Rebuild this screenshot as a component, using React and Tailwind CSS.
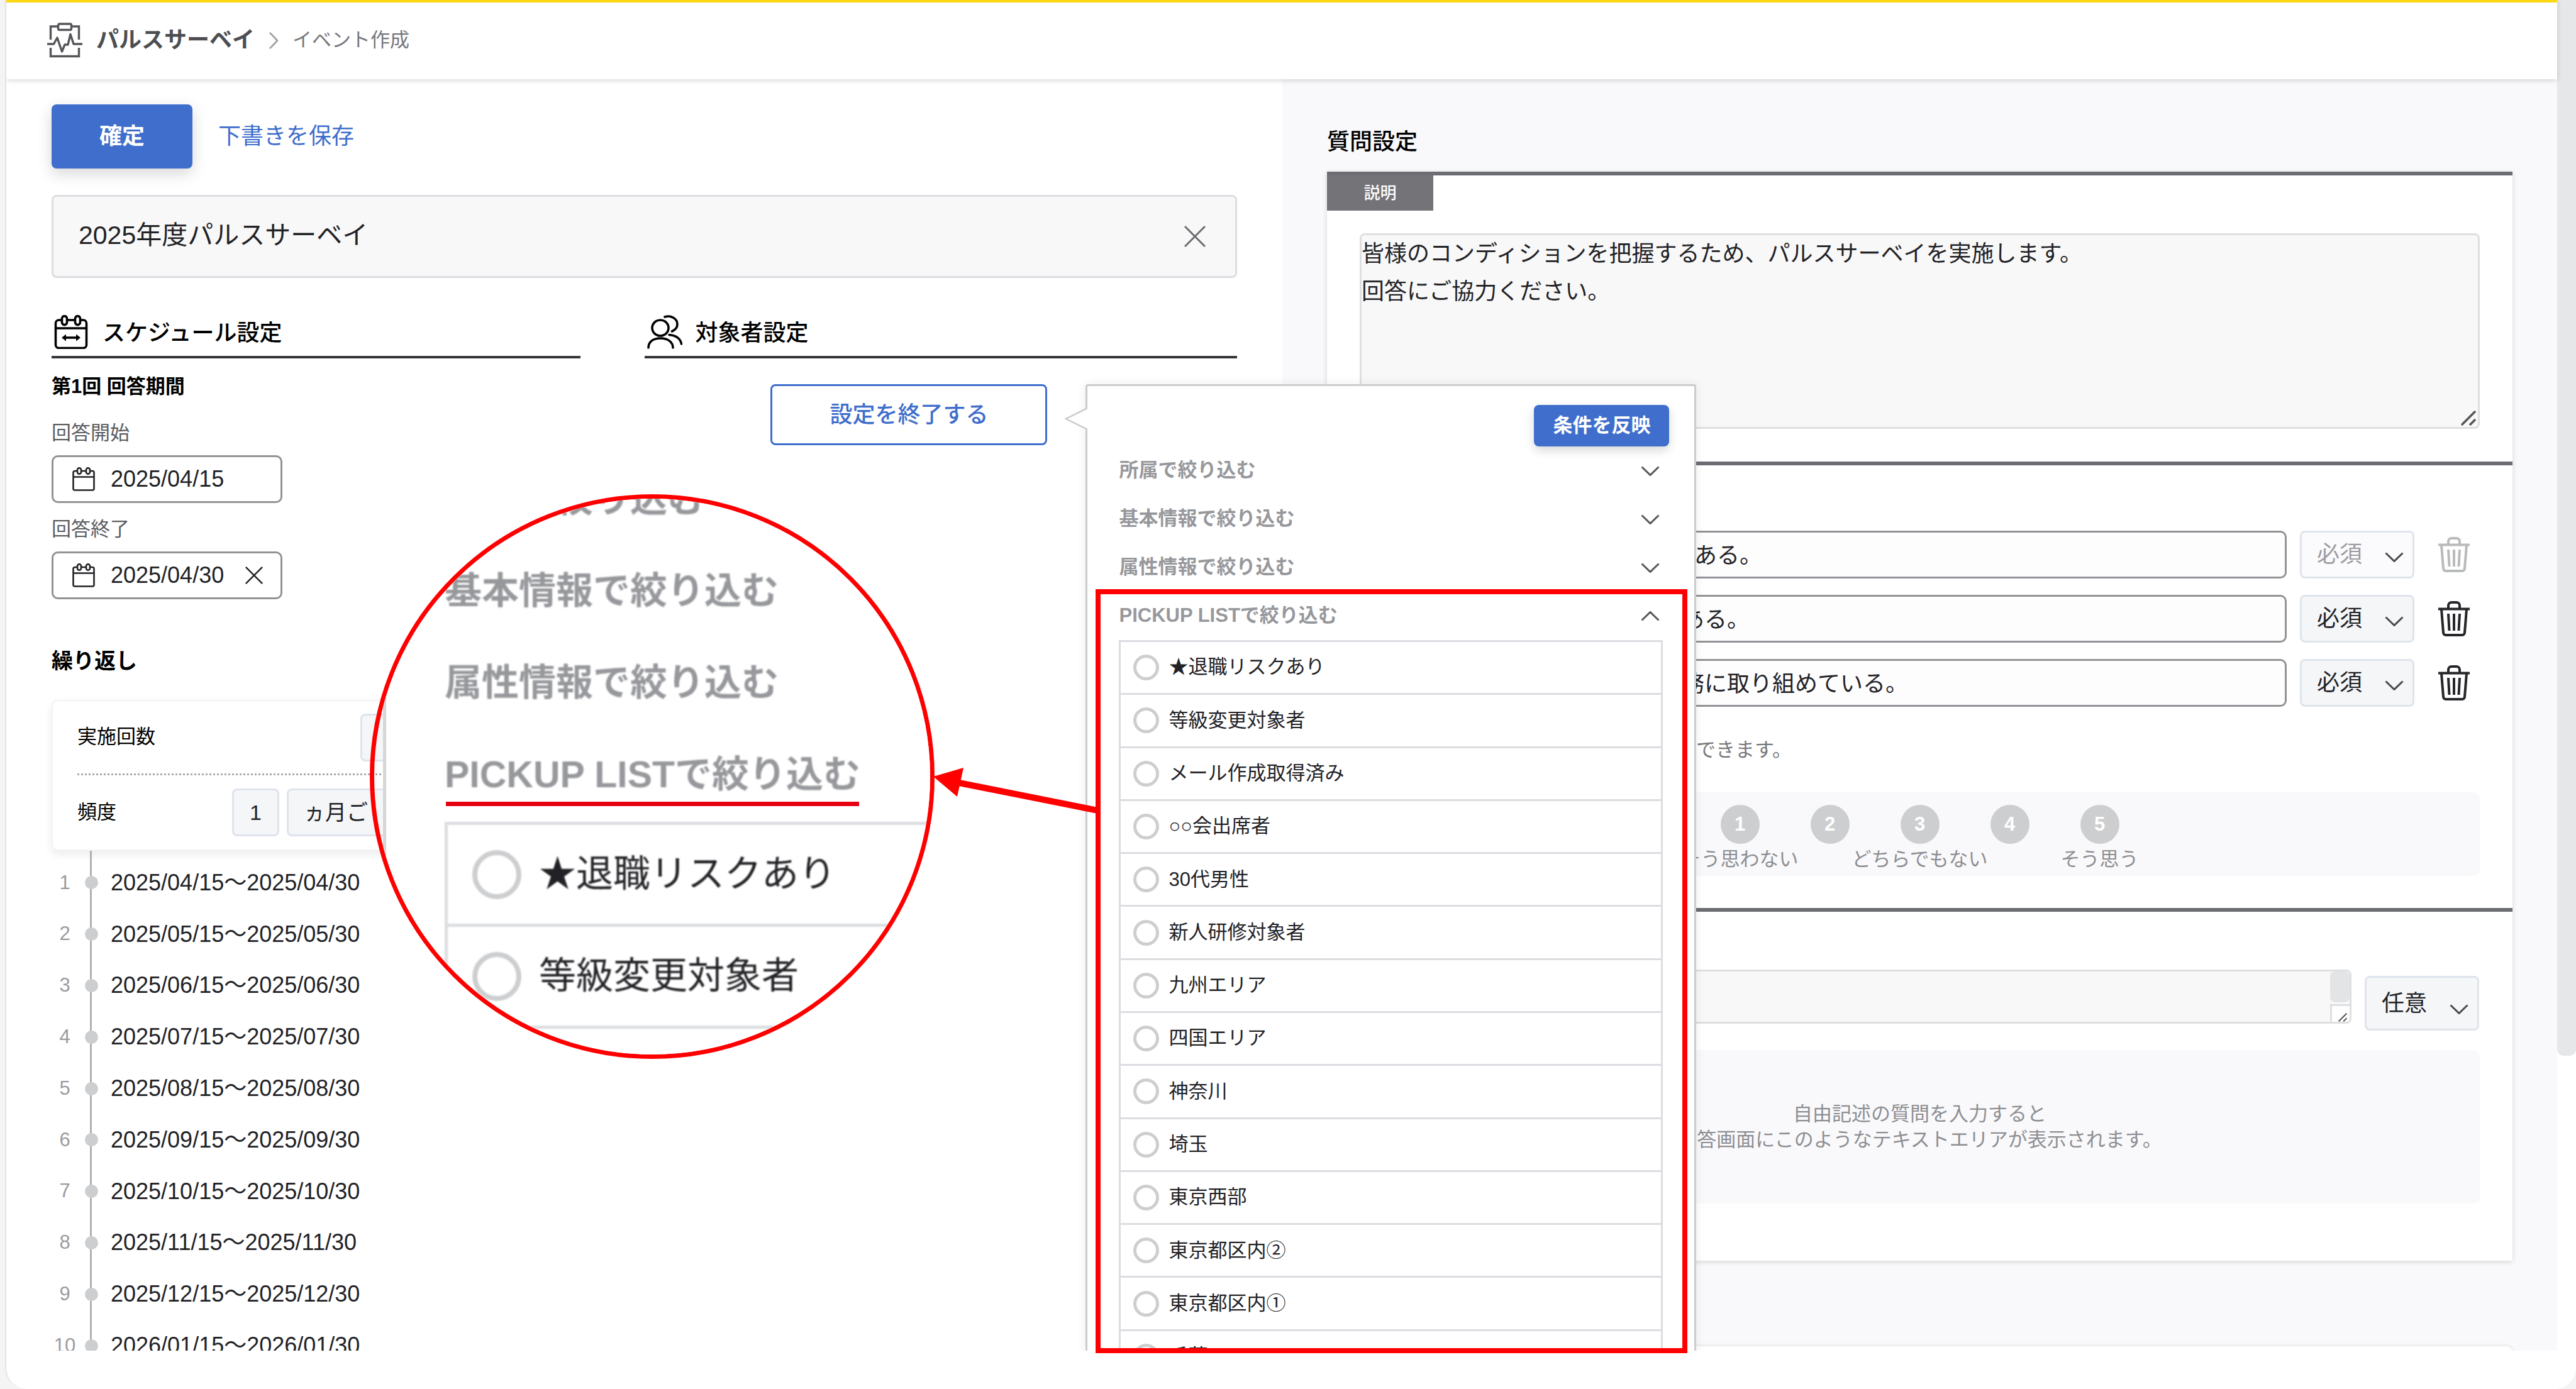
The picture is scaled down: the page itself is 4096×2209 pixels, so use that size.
import { useState } from 'react';

const SCHEDULE = [
  '2025/04/15～2025/04/30',
  '2025/05/15～2025/05/30',
  '2025/06/15～2025/06/30',
  '2025/07/15～2025/07/30',
  '2025/08/15～2025/08/30',
  '2025/09/15～2025/09/30',
  '2025/10/15～2025/10/30',
  '2025/11/15～2025/11/30',
  '2025/12/15～2025/12/30',
  '2026/01/15～2026/01/30',
];

const PICKUP_LIST = [
  '★退職リスクあり',
  '等級変更対象者',
  'メール作成取得済み',
  '○○会出席者',
  '30代男性',
  '新人研修対象者',
  '九州エリア',
  '四国エリア',
  '神奈川',
  '埼玉',
  '東京西部',
  '東京都区内②',
  '東京都区内①',
  '千葉',
];

const FILTERS = ['所属で絞り込む', '基本情報で絞り込む', '属性情報で絞り込む', 'PICKUP LISTで絞り込む'];

const SCALE = [
  { value: 1, label: 'そう思わない' },
  { value: 2, label: '' },
  { value: 3, label: 'どちらでもない' },
  { value: 4, label: '' },
  { value: 5, label: 'そう思う' },
];

function Chevron({ className }) {
  return (
    <svg className={className} viewBox="0 0 30 16" fill="none" stroke="currentColor" strokeWidth="3" aria-hidden="true">
      <path d="M1.5 1.5 15 14.5 28.5 1.5" />
    </svg>
  );
}

function Cross({ className }) {
  return (
    <svg className={className} viewBox="0 0 34 34" fill="none" stroke="currentColor" strokeWidth="3" aria-hidden="true">
      <path d="M1 1l32 32M33 1L1 33" />
    </svg>
  );
}

function PulseIcon() {
  return (
    <svg className="h-[56px] w-[56px] text-[#55565a]" viewBox="0 0 56 56" fill="none" stroke="currentColor" strokeWidth="3.4" aria-hidden="true">
      <path d="M5.5 27V6H17M39 6H50.5V27M5.5 40V53.5H50.5V40" />
      <rect x="17.5" y="2" width="21" height="9.5" rx="2" />
      <path d="M0 34H10.5L16 24 23.5 46 28 35H33L37 18.5 42 34H56" strokeLinejoin="round" />
    </svg>
  );
}

function ScheduleIcon() {
  return (
    <svg className="h-[54px] w-[54px]" viewBox="0 0 54 54" fill="none" stroke="currentColor" strokeWidth="3.6" aria-hidden="true">
      <path d="M11 8H7.5a5 5 0 0 0-5 5v34.5a5 5 0 0 0 5 5h39a5 5 0 0 0 5-5V13a5 5 0 0 0-5-5H43M21.5 8h11M2.5 21h49" />
      <rect x="12.5" y="1.6" width="8" height="14" rx="4" />
      <rect x="33.5" y="1.6" width="8" height="14" rx="4" />
      <path d="M15 36h24" />
      <path d="M19 30.5v11L12 36zM35 30.5v11L42 36z" fill="currentColor" stroke="none" />
    </svg>
  );
}

function PeopleIcon() {
  return (
    <svg className="h-[54px] w-[56px]" viewBox="0 0 56 54" fill="none" stroke="currentColor" strokeWidth="3.6" strokeLinecap="round" aria-hidden="true">
      <ellipse cx="21" cy="20.5" rx="13" ry="12.5" />
      <path d="M2 52C2 43 9 37 21 37s20 6 20 15" />
      <path d="M28 3c9-3 20 2 20 11.5 0 6-4 9.5-8.5 11.5M35 31.5C46 32 53 38 54.5 46" />
    </svg>
  );
}

function CalendarIcon() {
  return (
    <svg className="h-[38px] w-[36px]" viewBox="0 0 36 38" fill="none" stroke="currentColor" strokeWidth="2.6" aria-hidden="true">
      <path d="M7 6H4a2.5 2.5 0 0 0-2.5 2.5V34A2.5 2.5 0 0 0 4 36.5h28a2.5 2.5 0 0 0 2.5-2.5V8.5A2.5 2.5 0 0 0 32 6h-3M14.5 6h7M1.5 15.5h33" />
      <rect x="8" y="1.2" width="6" height="9.5" rx="3" />
      <rect x="22" y="1.2" width="6" height="9.5" rx="3" />
    </svg>
  );
}

function TrashIcon() {
  return (
    <svg className="h-[56px] w-[50px]" viewBox="0 0 50 56" fill="none" stroke="currentColor" strokeWidth="4" strokeLinejoin="round" aria-hidden="true">
      <path d="M0 12.5h50M16 12V7a5 5 0 0 1 5-5h8a5 5 0 0 1 5 5v5" />
      <path d="M5 13l3 37a4 4 0 0 0 4 4h26a4 4 0 0 0 4-4l3-37" />
      <path d="M16 20l1.5 27M25 20v27M34 20l-1.5 27" />
    </svg>
  );
}

function Grip({ className }) {
  return (
    <svg className={className} viewBox="0 0 24 24" fill="none" stroke="#555" strokeWidth="3.5" aria-hidden="true">
      <path d="M1 23 23 1M14 23l9-9" />
    </svg>
  );
}

function DateField({ id, label, value, clearable }) {
  return (
    <div>
      <label htmlFor={id} className="block text-[31px] leading-[46px] text-[#5b5c60]">
        {label}
      </label>
      <div className="mt-[12px] flex h-[76px] w-[367px] items-center rounded-[10px] border-[3px] border-[#929396] bg-white pl-[30px]">
        <CalendarIcon />
        <input id={id} defaultValue={value} className="ml-[25px] w-[190px] text-[36px] leading-[46px] outline-none" />
        {clearable && (
          <button type="button" aria-label="クリア" className="ml-[24px]">
            <Cross className="h-[28px] w-[28px]" />
          </button>
        )}
      </div>
    </div>
  );
}

function RequiredSelect({ label, value, disabled, className = 'h-[76px]' }) {
  return (
    <div className="relative w-[182px] shrink-0">
      <select
        aria-label={label}
        defaultValue={value}
        disabled={disabled}
        className={`${className} w-full appearance-none rounded-[8px] border-[3px] border-[#dfe4ec] pl-[24px] text-[36px] opacity-100 outline-none ${
          disabled ? 'bg-[#fbfbfd] text-[#9c9ca0]' : 'bg-[#f4f6f8] text-[#222226]'
        }`}
      >
        <option>必須</option>
        <option>任意</option>
      </select>
      <Chevron className="pointer-events-none absolute right-[17px] bottom-[26px] h-[16px] w-[30px] text-[#4a4a4e]" />
    </div>
  );
}

function QuestionRow({ id, value, disabled, indent }) {
  return (
    <div className="flex items-center">
      <input
        aria-label={id}
        defaultValue={value}
        className={`h-[76px] min-w-0 flex-1 rounded-[10px] border-[3px] border-[#929396] bg-[#fdfdfe] pb-[4px] text-[36px] outline-none ${indent}`}
      />
      <div className="ml-[21px]">
        <RequiredSelect label={`${id} 必須`} value="必須" disabled={disabled} />
      </div>
      <button type="button" aria-label="削除" className={`mr-[16px] ml-[38px] ${disabled ? 'text-[#b9babc]' : 'text-[#25262a]'}`}>
        <TrashIcon />
      </button>
    </div>
  );
}

function FilterPopover() {
  const [selected, setSelected] = useState('');

  return (
    <div className="absolute top-0 left-full z-20 ml-[61px] w-[971px] rounded-t-[4px] border-[3px] border-[#cbccce] bg-white shadow-[0_0_16px_rgba(0,0,0,0.08)]">
      {/* arrow to the button */}
      <svg className="absolute top-[34px] left-[-36px] h-[36px] w-[36px]" viewBox="0 0 36 36" aria-hidden="true">
        <path d="M36 1 2 18 36 35" fill="#fff" stroke="#cbccce" strokeWidth="2.5" />
      </svg>
      <div className="flex justify-end pt-[30px] pr-[40px]">
        <button type="button" className="h-[66px] w-[215px] rounded-[8px] bg-[#3f6ecc] text-[31px] font-bold text-white shadow-[0_6px_16px_rgba(0,0,0,0.16)]">
          条件を反映
        </button>
      </div>
      <div className="px-[50px]">
        {FILTERS.map((name, i) => (
          <button key={name} type="button" className="flex h-[77px] w-full items-center justify-between pr-[5px] text-[31px] font-bold text-[#97989c]">
            {name}
            <Chevron className={`h-[16px] w-[30px] text-[#55565a] ${i === 3 ? 'rotate-180' : ''}`} />
          </button>
        ))}
        <div className="grid h-[1183px] auto-rows-fr border-x-[3px] border-t-[3px] border-[#dcdde1]">
          {PICKUP_LIST.map((name) => (
            <label key={name} className="flex items-center border-b-[3px] border-[#dcdde1] pl-[20px] text-[31px]">
              <input
                type="radio"
                name="pickup"
                checked={selected === name}
                onChange={() => setSelected(name)}
                className="mr-[15px] h-[41px] w-[41px] appearance-none rounded-full border-[5px] border-[#cdced0] bg-white checked:border-[#3f6ecc]"
              />
              {name}
            </label>
          ))}
        </div>
      </div>
    </div>
  );
}

function EventSettings() {
  return (
    <section className="min-w-0 flex-1 px-[72px] pt-[40px]">
      <div className="flex items-center">
        <button type="button" className="h-[102px] w-[224px] rounded-[8px] bg-[#3f6ecc] text-[36px] font-bold text-white shadow-[0_8px_24px_rgba(0,0,0,0.16)]">
          確定
        </button>
        <button type="button" className="ml-[41px] text-[36px] text-[#3f6ecc]">
          下書きを保存
        </button>
      </div>

      <div className="mt-[42px] flex h-[132px] items-center rounded-[8px] border-[3px] border-[#dcdde1] bg-[#f8f8f8] pr-[47px] pl-[40px]">
        <input aria-label="イベント名" defaultValue="2025年度パルスサーベイ" className="min-w-0 flex-1 pb-[4px] text-[41px] leading-[60px] outline-none" />
        <button type="button" aria-label="クリア" className="text-[#6c6d70]">
          <Cross className="h-[34px] w-[34px]" />
        </button>
      </div>

      <div className="mt-[48px] grid grid-cols-[minmax(0,841fr)_minmax(0,941fr)] gap-[102px]">
        <div>
          <h2 className="flex h-[80px] items-center border-b-[4px] border-[#34353a] pl-[4px] text-[36px] font-medium text-black">
            <ScheduleIcon />
            <span className="ml-[23px] pt-[4px]">スケジュール設定</span>
          </h2>
          <h3 className="mt-[22px] text-[31px] leading-[46px] font-bold text-black">第1回 回答期間</h3>
          <div className="mt-[28px] flex flex-col gap-[19px]">
            <DateField id="start" label="回答開始" value="2025/04/15" />
            <DateField id="end" label="回答終了" value="2025/04/30" clearable />
          </div>
          <h3 className="mt-[75px] text-[34px] leading-[46px] font-bold text-black">繰り返し</h3>

          <div className="mt-[39px] rounded-[10px] border-[2px] border-[#f3f3f4] bg-white px-[39px] shadow-[0_6px_14px_rgba(0,0,0,0.08)]">
            <div className="flex h-[118px] items-center border-b-[3px] border-dotted border-[#a9aaad]">
              <label htmlFor="times" className="w-[450px] text-[31px] text-black">
                実施回数
              </label>
              <input id="times" className="h-[76px] min-w-0 flex-1 rounded-[8px] border-[3px] border-[#dfe4ec] bg-[#f4f6f8]" />
            </div>
            <div className="flex h-[118px] items-center">
              <label htmlFor="interval" className="w-[246px] text-[31px] text-black">
                頻度
              </label>
              <input id="interval" defaultValue="1" className="h-[76px] w-[75px] rounded-[8px] border-[3px] border-[#dfe4ec] bg-[#f4f6f8] text-center text-[34px]" />
              <select aria-label="単位" className="ml-[12px] h-[76px] min-w-0 flex-1 appearance-none rounded-[8px] border-[3px] border-[#dfe4ec] bg-[#f4f6f8] pr-[290px] pl-[24px] text-[34px]">
                <option>ヵ月ごと</option>
              </select>
            </div>
          </div>

          <div className="relative pt-[10px]">
            <div className="absolute inset-y-0 left-[61px] w-[3px] bg-[#b0b1b3]" />
            <ol className="relative grid h-[818px] auto-rows-fr">
              {SCHEDULE.map((period, i) => (
                <li key={period} className="flex items-center text-[36px]">
                  <span className="w-[42px] text-center text-[31px] text-[#9a9b9f]">{i + 1}</span>
                  <span className="ml-[11px] h-[21px] w-[21px] rounded-full bg-[#cdced0]" />
                  <span className="ml-[20px]">{period}</span>
                </li>
              ))}
            </ol>
          </div>
        </div>

        <div>
          <h2 className="flex h-[80px] items-center border-b-[4px] border-[#34353a] pl-[4px] text-[36px] font-medium text-black">
            <PeopleIcon />
            <span className="ml-[20px] pt-[4px]">対象者設定</span>
          </h2>
          <div className="mt-[41px] pl-[200px]">
            <div className="relative w-[440px]">
              <button type="button" className="h-[97px] w-full rounded-[8px] border-[3px] border-[#3f6ecc] bg-white text-[36px] font-medium text-[#3f6ecc]">
                設定を終了する
              </button>
              <FilterPopover />
            </div>
          </div>
        </div>
      </div>
    </section>
  );
}

function QuestionSettings() {
  return (
    <section className="min-w-0 flex-1 bg-[#f9f9fb] px-[71px] pt-[77px]">
      <h2 className="text-[36px] leading-[46px] font-medium text-black">質問設定</h2>

      <div className="mt-[24px] bg-white shadow-[0_2px_8px_rgba(0,0,0,0.14)]">
        <div className="border-t-[6px] border-[#6c6d72] pb-[52px]">
          <div className="flex h-[56px] w-[169px] items-center justify-center bg-[#747478] text-[26px] font-medium text-white">説明</div>
          <div className="relative mx-[52px] mt-[36px] h-[311px]">
            <textarea
              aria-label="説明"
              defaultValue={'皆様のコンディションを把握するため、パルスサーベイを実施します。\n回答にご協力ください。'}
              className="block h-full w-full resize-none rounded-[8px] border-[3px] border-[#dedfe1] bg-[#f8f8f8] text-[36px] leading-[60px] outline-none"
            />
            <Grip className="pointer-events-none absolute right-[6px] bottom-[5px] h-[24px] w-[24px]" />
          </div>
        </div>

        <div className="border-t-[6px] border-[#6c6d72] px-[52px] pt-[104px] pb-[51px]">
          <div className="flex flex-col gap-[26px]">
            <QuestionRow id="質問1" value="ある。" indent="pl-[529px]" disabled />
            <QuestionRow id="質問2" value="ある。" indent="pl-[509px]" />
            <QuestionRow id="質問3" value="務に取り組めている。" indent="pl-[509px]" />
          </div>
          <p className="mt-[46px] pl-[535px] text-[31px] leading-[46px] text-[#77787c]">できます。</p>
          <div className="mt-[44px] flex h-[133px] justify-center rounded-[10px] bg-[#f9f9fb] pt-[20px]">
            {SCALE.map(({ value, label }) => (
              <div key={value} className="flex w-[143px] flex-col items-center">
                <span className="flex h-[62px] w-[62px] items-center justify-center rounded-full bg-[#cdced0] text-[31px] font-bold text-white">{value}</span>
                <span className="mt-[2px] text-[31px] leading-[46px] whitespace-nowrap text-[#8d8e92]">{label}</span>
              </div>
            ))}
          </div>
        </div>

        <div className="border-t-[6px] border-[#6c6d72] px-[52px] pt-[92px] pb-[91px]">
          <div className="flex">
            <div className="relative h-[86px] min-w-0 flex-1 overflow-hidden rounded-[8px] border-[3px] border-[#dedfe1] bg-[#f8f8f8]">
              <textarea aria-label="自由記述" className="block h-full w-full resize-none outline-none" />
              <div className="absolute inset-y-0 right-0 flex w-[31px] flex-col bg-[#f8f8f8]">
                <div className="h-[49px] rounded-[8px] bg-[#e3e4e6]" />
                <div className="mt-[3px] flex-1 border-t-[3px] border-l-[3px] border-[#dedfe1] bg-white">
                  <Grip className="mt-[11px] ml-[10px] h-[14px] w-[14px]" />
                </div>
              </div>
            </div>
            <div className="mt-[10px] mr-[1px] ml-[21px]">
              <RequiredSelect label="自由記述 任意" value="任意" className="h-[87px]" />
            </div>
          </div>
          <div className="mt-[31px] flex h-[244px] items-center justify-center rounded-[10px] bg-[#f9f9fb] text-center text-[31px] leading-[41px] text-[#8d8e92]">
            <p>
              自由記述の質問を入力すると
              <br />
              回答画面にこのようなテキストエリアが表示されます。
            </p>
          </div>
        </div>
      </div>

      <div className="mt-[136px] h-[120px] rounded-t-[10px] bg-white shadow-[0_0_6px_rgba(0,0,0,0.12)]" />
    </section>
  );
}

// Red callout: frame round the pickup list, arrow and magnified lens
function Callout() {
  return (
    <div className="pointer-events-none absolute inset-0 z-30">
      <div className="absolute top-[937px] left-[1742px] h-[1215px] w-[941px] border-[8px] border-[#ff0000]" />

      <div className="absolute top-[786px] left-[588px] h-[898px] w-[898px] overflow-hidden rounded-full border-[7px] border-[#ff0000]">
        <div className="absolute inset-y-0 right-0 left-[14px] border-l-[5px] border-[#d5d6d8] bg-white" />
        <div className="relative -mt-[72px] pl-[112px] blur-[1px]">
          {FILTERS.map((name) => (
            <div key={name} className="flex h-[146px] items-center text-[59px] font-bold whitespace-nowrap text-[#97989c]">
              {name}
            </div>
          ))}
          <div className="mt-[2px] w-[900px] border-l-[5px] border-[#dcdde1]">
            {PICKUP_LIST.slice(0, 3).map((name) => (
              <div key={name} className="flex h-[162px] items-center border-t-[5px] border-[#dcdde1] pl-[39px] text-[59px] whitespace-nowrap">
                <span className="mr-[28px] h-[78px] w-[78px] rounded-full border-[8px] border-[#cdced0]" />
                {name}
              </div>
            ))}
          </div>
        </div>
        <div className="absolute top-[482px] left-[114px] h-[7px] w-[657px] bg-[#e60012]" />
      </div>

      <svg className="absolute top-[1210px] left-[1480px] h-[90px] w-[266px]" viewBox="0 0 266 90" aria-hidden="true">
        <path d="M45 35 266 79" stroke="#ff0000" strokeWidth="10" />
        <path d="M4 25 52 11 42 57z" fill="#ff0000" />
      </svg>
    </div>
  );
}

export default function App() {
  return (
    <div className="relative flex h-screen overflow-hidden bg-[#f4f4f5] pl-[8px] font-['Liberation_Sans','Noto_Sans_CJK_JP',sans-serif] text-[#222226]">
      <div className="flex min-w-0 flex-1 overflow-hidden rounded-b-[34px] border-l-[2px] border-[#e4e4e5] bg-white">
        <div className="flex min-w-0 flex-1 flex-col">
          <header className="relative z-10 flex h-[126px] shrink-0 items-center border-t-[4px] border-[#ffd814] bg-white pb-[2px] pl-[65px] shadow-[0_2px_8px_rgba(0,0,0,0.16)]">
            <PulseIcon />
            <nav className="ml-[22px] flex items-center">
              <a href="#survey" className="text-[36px] font-bold text-[#4d4e52]">
                パルスサーベイ
              </a>
              <Chevron className="mx-[16px] h-[15px] w-[28px] -rotate-90 text-[#a0a1a4]" />
              <span className="text-[31px] text-[#77787c]">イベント作成</span>
            </nav>
          </header>
          <main className="flex min-h-0 flex-1 overflow-hidden">
            <EventSettings />
            <QuestionSettings />
          </main>
          <div className="h-[61px] shrink-0" />
        </div>
        <div className="w-[30px] shrink-0">
          <div className="h-[76%] rounded-b-[10px] bg-[#e6e7e9]" />
        </div>
      </div>
      <Callout />
    </div>
  );
}
